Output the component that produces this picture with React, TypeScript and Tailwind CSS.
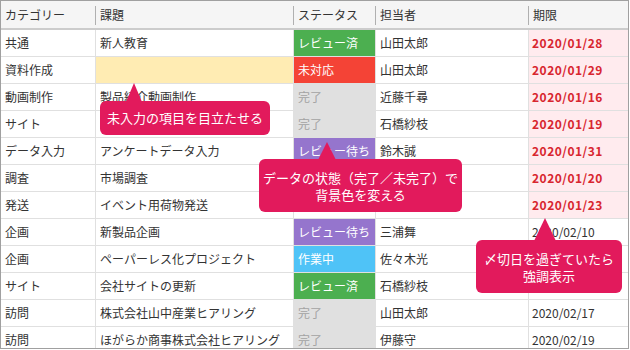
import React from 'react';

type Status = 'done' | 'review' | 'todo' | 'wait' | 'doing' | 'none';

interface Task {
  category: string;
  title: string;
  status: Status;
  owner: string;
  due: string;
  overdue: boolean;
}

// cells that sit fully under a callout in the reference are left blank
const tasks: Task[] = [
  { category: '共通', title: '新人教育', status: 'review', owner: '山田太郎', due: '2020/01/28', overdue: true },
  { category: '資料作成', title: '', status: 'todo', owner: '山田太郎', due: '2020/01/29', overdue: true },
  { category: '動画制作', title: '製品紹介動画制作', status: 'done', owner: '近藤千尋', due: '2020/01/16', overdue: true },
  { category: 'サイト', title: '', status: 'done', owner: '石橋紗枝', due: '2020/01/19', overdue: true },
  { category: 'データ入力', title: 'アンケートデータ入力', status: 'wait', owner: '鈴木誠', due: '2020/01/31', overdue: true },
  { category: '調査', title: '市場調査', status: 'none', owner: '', due: '2020/01/20', overdue: true },
  { category: '発送', title: 'イベント用荷物発送', status: 'none', owner: '', due: '2020/01/23', overdue: true },
  { category: '企画', title: '新製品企画', status: 'wait', owner: '三浦舞', due: '2020/02/10', overdue: false },
  { category: '企画', title: 'ペーパーレス化プロジェクト', status: 'doing', owner: '佐々木光', due: '', overdue: false },
  { category: 'サイト', title: '会社サイトの更新', status: 'review', owner: '石橋紗枝', due: '', overdue: false },
  { category: '訪問', title: '株式会社山中産業ヒアリング', status: 'done', owner: '山田太郎', due: '2020/02/17', overdue: false },
  { category: '訪問', title: 'ほがらか商事株式会社ヒアリング', status: 'done', owner: '伊藤守', due: '2020/02/19', overdue: false },
];

// status label + cell colour
const statusCell = (s: Status) => {
  switch (s) {
    case 'review': return { label: 'レビュー済', cls: 'bg-[#4caf50] text-white' };
    case 'todo': return { label: '未対応', cls: 'bg-[#f44336] text-white' };
    case 'done': return { label: '完了', cls: 'bg-[#e0e0e0] text-[#a3a3a3]' };
    case 'wait': return { label: 'レビュー待ち', cls: 'bg-[#9575cd] text-white' };
    case 'doing': return { label: '作業中', cls: 'bg-[#4fc3f7] text-white' };
    default: return { label: '', cls: 'bg-white' };
  }
};

const cols = 'grid grid-cols-[95px_198px_82px_153px_99px]';
const cell = 'flex items-center pl-[4px] border-r border-[#e0e0e0] whitespace-nowrap overflow-hidden';

const Arrow = ({ w, h, className }: { w: number; h: number; className: string }) => (
  <svg width={w} height={h} className={className}>
    <polygon points={`${w / 2},0 ${w},${h} 0,${h}`} fill="#e21a5c" />
  </svg>
);

export default function App() {
  return (
    <div className="relative w-[629px] h-[349px] border border-[#a0a0a0] overflow-hidden bg-white font-['Noto_Sans_CJK_JP',sans-serif] text-[12px] text-[#333]">
      {/* Header */}
      <div className={`${cols} h-[29px] bg-[#f5f5f5] border-b-2 border-[#cccccc]`}>
        {['カテゴリー', '課題', 'ステータス', '担当者', '期限'].map((h, i) => (
          <div key={h} className="relative flex items-center pl-[4px]">
            {i > 0 && <span className="absolute left-[-1px] top-[5px] h-[19px] w-px bg-[#b0b0b0]" />}
            {h}
          </div>
        ))}
      </div>

      {/* Rows */}
      {tasks.map((t, i) => {
        const st = statusCell(t.status);
        return (
          <div key={i} className={`${cols} h-[27px] border-b border-[#e0e0e0]`}>
            <div className={cell}>{t.category}</div>
            <div className={`${cell} ${t.title || i !== 1 ? '' : 'bg-[#ffecb3]'}`}>{t.title}</div>
            <div className={`${cell} pl-[3px] ${st.cls}`}>{st.label}</div>
            <div className={cell}>{t.owner}</div>
            <div
              className={`flex items-center pl-[3px] ${
                t.overdue ? 'bg-[#ffebee] text-[#d8262f] font-bold tracking-[0.5px]' : ''
              }`}
            >
              {t.due}
            </div>
          </div>
        );
      })}

      {/* Callouts */}
      <Arrow w={16} h={19} className="absolute left-[125px] top-[82px]" />
      <div className="absolute left-[99px] top-[100px] w-[170px] h-[34px] rounded-[6px] bg-[#e21a5c] text-white text-[13px] flex items-center justify-center">
        未入力の項目を目立たせる
      </div>

      <Arrow w={18} h={18} className="absolute left-[317px] top-[141px]" />
      <div className="absolute left-[258px] top-[158px] w-[203px] h-[53px] rounded-[6px] bg-[#e21a5c] text-white text-[13px] leading-[17px] flex flex-col items-center justify-center">
        <span>データの状態（完了／未完了）で</span>
        <span>背景色を変える</span>
      </div>

      <Arrow w={22} h={23} className="absolute left-[533px] top-[217px]" />
      <div className="absolute left-[475px] top-[239px] w-[146px] h-[53px] rounded-[6px] bg-[#e21a5c] text-white text-[13px] leading-[17px] flex flex-col items-center justify-center">
        <span>〆切日を過ぎていたら</span>
        <span>強調表示</span>
      </div>
    </div>
  );
}
